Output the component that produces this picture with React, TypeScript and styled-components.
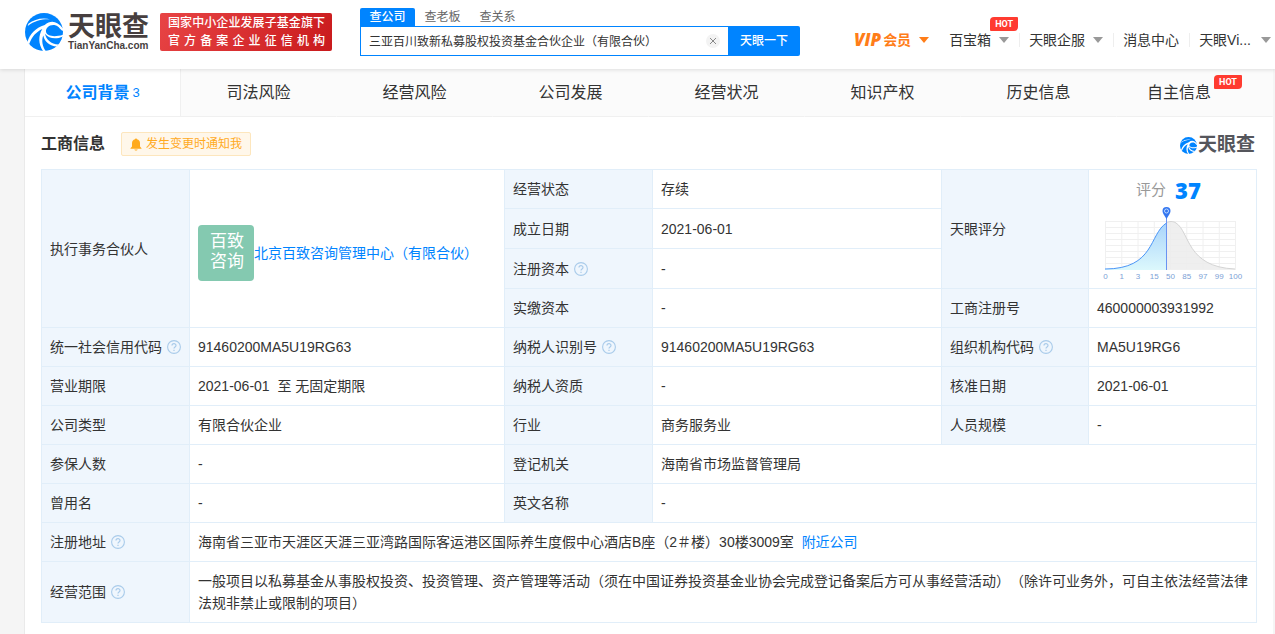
import React from "react";
import styled, { createGlobalStyle, css } from "styled-components";

const Global = createGlobalStyle`
  * { box-sizing: border-box; }
  body {
    margin: 0;
    background: #f5f5f5;
    color: #333;
    font: 14px/22px "Liberation Sans", "Noto Sans CJK SC", sans-serif;
    text-spacing-trim: space-all;
  }
  button, input { font: inherit; color: inherit; padding: 0; margin: 0; border: 0; background: none; }
  button { cursor: pointer; }
  a { color: #0084ff; text-decoration: none; }
`;

/* ---------- header ---------- */

const Header = styled.header`
  position: relative;
  display: flex;
  align-items: flex-start;
  height: 69px;
  padding: 0 4px 0 25px;
  background: #fff;
  box-shadow: 0 1px 4px rgba(0, 0, 0, 0.12);
`;

const Brand = styled.a`
  display: flex;
  gap: 5px;
  padding-top: 13px;
  color: #473f3f;
`;

const BrandText = styled.span`
  display: flex;
  flex-direction: column;
  width: 81px;
  padding-top: 1px;
`;

const BrandName = styled.strong`
  font-size: 27px;
  line-height: 27px;
  white-space: nowrap;
`;

const BrandDomain = styled.strong`
  font-size: 10px;
  line-height: 10px;
`;

const Slogan = styled.p`
  width: 172px;
  margin: 13px 0 0 11px;
  padding: 1px 7px 1px 8px;
  border-radius: 2px;
  background: linear-gradient(120deg, #e84445, #c91a1c);
  color: #fff;
  font-size: 12px;
  font-weight: 500;
  line-height: 18px;
  white-space: nowrap;
`;

const SloganLine = styled.span`
  display: block;
  text-align-last: justify;
`;

const Search = styled.form`
  flex: none;
  width: 440px;
  margin: 8px 0 0 28px;
  font-size: 12px;
`;

const SearchTabs = styled.div`
  display: flex;
`;

const SearchTab = styled.button<{ $active?: boolean }>`
  width: 55px;
  height: 18px;
  line-height: 18px;
  color: #666;
  ${(p) =>
    p.$active &&
    css`
      border-radius: 2px 2px 0 0;
      background: #0084ff;
      color: #fff;
      font-weight: 500;
    `}
`;

const SearchRow = styled.div`
  display: flex;
  height: 30px;
`;

const SearchField = styled.div`
  display: flex;
  flex: 1;
  align-items: center;
  padding: 0 8px;
  border: 1px solid #0084ff;
  border-right: 0;
`;

const SearchInput = styled.input`
  flex: 1;
  min-width: 0;
  padding-top: 2px;
  outline: none;
`;

const ClearButton = styled.button`
  display: flex;
  align-items: center;
  justify-content: center;
  width: 14px;
  height: 14px;
  border-radius: 50%;
  background: #f3f3f3;
`;

const SearchButton = styled.button`
  width: 72px;
  border-radius: 0 2px 2px 0;
  background: #0084ff;
  color: #fff;
  font-weight: 500;
`;

const Nav = styled.nav`
  display: flex;
  margin: 29px 0 0 auto;
  white-space: nowrap;
`;

const NavLink = styled.a<{ $vip?: boolean }>`
  position: relative;
  display: flex;
  align-items: center;
  gap: 8px;
  padding: 0 10px;
  color: ${(p) => (p.$vip ? "#ff7d18" : "#333")};
  font-weight: ${(p) => (p.$vip ? 700 : 400)};
  & + &::before {
    content: "";
    position: absolute;
    left: 0;
    height: 14px;
    border-left: 1px solid #eee;
  }
  &:last-child { padding-right: 0; gap: 10px; }
`;

const VipWord = styled.em`
  margin-right: 2px;
  font-family: "Open Sans", sans-serif;
  font-size: 17px;
  font-weight: 800;
`;

const VipText = styled.span`
  display: flex;
  align-items: center;
`;

const Caret = styled.i`
  border: 5px solid transparent;
  border-top: 6px solid #999;
  border-bottom: 0;
  ${NavLink}:first-child & { border-top-color: #ff7d18; }
`;

const HotBadge = styled.span`
  width: 28px;
  height: 14px;
  border-radius: 4px 1px 4px 1px;
  background: #ff3b30;
  color: #fff;
  font: 700 9px/14px Roboto, sans-serif;
  text-align: center;
`;

const NavHotBadge = styled(HotBadge)`
  position: absolute;
  top: -12px;
  right: 1px;
`;

const TabHotBadge = styled(HotBadge)`
  align-self: flex-start;
  margin-top: 6px;
`;

/* ---------- page ---------- */

const Page = styled.main`
  margin: 0 2px 0 24px;
  padding-bottom: 16px;
  border-left: 1px solid #eaeaea;
  background: #fff;
`;

const Tabs = styled.nav`
  display: grid;
  grid-template-columns: repeat(8, 1fr);
  height: 48px;
`;

const Tab = styled.a<{ $active?: boolean }>`
  display: flex;
  align-items: center;
  justify-content: center;
  gap: 3px;
  border-right: 1px solid ${(p) => (p.$active ? "#f0f0f0" : "transparent")};
  border-bottom: 1px solid #f0f0f0;
  background: ${(p) => (p.$active ? "#fff" : "#fbfbfb")};
  color: ${(p) => (p.$active ? "#0084ff" : "#333")};
  font-size: 16px;
  font-weight: ${(p) => (p.$active ? 700 : 400)};
`;

const TabCount = styled.span`
  font-size: 13px;
  font-weight: 400;
`;

const Section = styled.section`
  padding: 0 16px;
`;

const SectionHead = styled.div`
  display: flex;
  align-items: center;
  height: 52px;
  padding-top: 2px;
`;

const SectionTitle = styled.h2`
  margin: 0 16px 0 0;
  font-size: 16px;
  line-height: 24px;
`;

const NotifyButton = styled.button`
  display: flex;
  align-items: center;
  justify-content: center;
  gap: 4px;
  width: 130px;
  height: 24px;
  border: 1px solid #fde6bd;
  border-radius: 2px;
  background: #fff7ea;
  color: #ffaa1e;
  font-size: 12px;
`;

const Watermark = styled.span`
  display: flex;
  align-items: center;
  gap: 1px;
  margin: 2px 2px 0 auto;
  color: #55565c;
  font-size: 19px;
  font-weight: 700;
  line-height: 20px;
`;

const InfoTable = styled.table`
  width: 100%;
  table-layout: fixed;
  border-collapse: collapse;
`;

const Row = styled.tr<{ $tall?: boolean }>`
  height: ${(p) => (p.$tall ? "40px" : "39px")};
`;

const Label = styled.th`
  padding: 0 8px;
  border: 1px solid #e1eef9;
  background: #eff6fd;
  font-weight: 400;
  text-align: left;
`;

const Value = styled.td`
  padding: 8px 7px 8px 8px;
  border: 1px solid #e1eef9;
`;

const ScoreCell = styled(Value)`
  padding: 7px 8px 0 0;
  vertical-align: top;
`;

const LabelText = styled.span`
  display: flex;
  align-items: center;
  gap: 5px;
`;

const Partner = styled.div`
  display: flex;
  align-items: center;
  padding-top: 8px;
`;

const PartnerLogo = styled.span`
  flex: none;
  width: 56px;
  height: 56px;
  padding: 7px 8px 8px 12px;
  border-radius: 4px;
  background: #84c9b0;
  color: #fff;
  font-size: 17px;
  line-height: 20px;
`;

const Score = styled.div`
  display: flex;
  align-items: center;
  justify-content: center;
  gap: 9px;
  height: 26px;
  color: #999;
  font-size: 15px;
`;

const ScoreNumber = styled.strong`
  color: #0084ff;
  font: 800 22px/26px "Open Sans", "Liberation Sans", sans-serif;
`;

const Chart = styled.svg`
  display: block;
  margin: 3px 0 0 11px;
`;

const LogoMark = ({ size }: { size: number }) => (
  <svg width={size} height={size} viewBox="0 0 112 112" aria-hidden="true">
    <circle cx="56" cy="56" r="56" fill="#0084ff" />
    <g fill="#fff">
      <path d="M7 86C14 62 30 44 58 35C76 20 94 22 112 46L112 52C103 51 102 39 89 36C72 33 60 45 62 56C65 68 86 72 112 64L112 69C90 79 70 75 59 61C62 78 76 91 99 93L94 99C73 96 58 86 54 66C48 80 51 97 61 112L53 112C39 91 39 67 51 47C34 55 21 68 12 92Z" />
      <path d="M10 32C28 17 54 12 76 19C54 17 30 22 8 38Z" />
    </g>
  </svg>
);

const Help = () => (
  <svg width="14" height="14" viewBox="0 0 14 14" fill="none" stroke="#a9cbea" aria-hidden="true">
    <circle cx="7" cy="7" r="6.4" strokeWidth="1.1" />
    <path d="M5 5.6C5 3.1 9 3.1 9 5.5C9 7 7 7 7 8.6M7 9.8V11" strokeWidth="1.2" />
  </svg>
);

const Bell = () => (
  <svg width="12" height="13" viewBox="0 0 12 13" fill="#ffaa1e" aria-hidden="true">
    <path d="M5 1.2C5 .2 7 .2 7 1.2C9 1.7 10 3.2 10 5.2V8.4L11.5 10.2V10.8H.5V10.2L2 8.4V5.2C2 3.2 3 1.7 5 1.2ZM4.3 11.5H7.7C7.2 12.9 4.8 12.9 4.3 11.5Z" />
  </svg>
);

const ticks = ["0", "1", "3", "15", "50", "85", "97", "99", "100"];

const ScoreChart = () => (
  <Chart width="144" height="76" viewBox="0 0 144 76" role="img" aria-label="评分分布">
    <defs>
      <linearGradient id="fill" x1="0" y1="0" x2="0" y2="1">
        <stop offset="0" stopColor="#a9d4fb" />
        <stop offset="1" stopColor="#dcf8fc" />
      </linearGradient>
    </defs>
    <g stroke="#f0f0f0">
      {[0, 1, 2, 3, 4, 5, 6, 7, 8].map((i) => (
        <path key={i} d={`M5 ${15.5 + i * 6}H136`} />
      ))}
      {ticks.map((t, i) => (
        <path key={t} d={`M${5.5 + i * 16.25} 15V64`} />
      ))}
    </g>
    <path d="M66.5 17C69 15 73 15 76 17C90 26 86 61 135 63H66.5Z" fill="#ececec" fillOpacity=".85" />
    <path d="M66.5 17C69 15 73 15 76 17C90 26 86 61 135 63" fill="none" stroke="#d4d4d4" />
    <path d="M5 63C55 63 49 28 66.5 17V64H5Z" fill="url(#fill)" />
    <path d="M5 63C55 63 49 28 66.5 17" fill="none" stroke="#4a95f7" />
    <path d="M66.5 10V64" stroke="#6a93f2" />
    <path d="M66.5 13C64 9 62.500 7 62.5 5A4 4 0 0 1 70.5 5C70.5 7 69 9 66.5 13Z" fill="#3577f0" />
    <circle cx="66.5" cy="5" r="2" fill="none" stroke="#bcd8ff" />
    <g fill="#7d9fd6" fontSize="8" textAnchor="middle" fontFamily="Liberation Sans, sans-serif">
      {ticks.map((t, i) => (
        <text key={t} x={5.5 + i * 16.25} y="73">
          {t}
        </text>
      ))}
    </g>
  </Chart>
);

type FieldProps = { label: string; help?: boolean; span?: number; children: React.ReactNode };

const Field = ({ label, help, span, children }: FieldProps) => (
  <>
    <Label scope="row">
      <LabelText>
        {label}
        {help && <Help />}
      </LabelText>
    </Label>
    <Value colSpan={span}>{children}</Value>
  </>
);

const pageTabs = ["司法风险", "经营风险", "公司发展", "经营状况", "知识产权", "历史信息", "自主信息"];

export default function App() {
  return (
    <>
      <Global />
      <Header>
        <Brand href="#">
          <LogoMark size={38} />
          <BrandText>
            <BrandName>天眼查</BrandName>
            <BrandDomain>TianYanCha.com</BrandDomain>
          </BrandText>
        </Brand>
        <Slogan>
          <SloganLine>国家中小企业发展子基金旗下</SloganLine>
          <SloganLine>官方备案企业征信机构</SloganLine>
        </Slogan>
        <Search onSubmit={(e) => e.preventDefault()}>
          <SearchTabs>
            <SearchTab type="button" $active>查公司</SearchTab>
            <SearchTab type="button">查老板</SearchTab>
            <SearchTab type="button">查关系</SearchTab>
          </SearchTabs>
          <SearchRow>
            <SearchField>
              <SearchInput aria-label="搜索公司" defaultValue="三亚百川致新私募股权投资基金合伙企业（有限合伙）" />
              <ClearButton type="button" aria-label="清除">
                <svg width="6" height="6" viewBox="0 0 6 6" stroke="#888" aria-hidden="true">
                  <path d="M0 0L6 6M6 0L0 6" />
                </svg>
              </ClearButton>
            </SearchField>
            <SearchButton>天眼一下</SearchButton>
          </SearchRow>
        </Search>
        <Nav>
          <NavLink href="#" $vip>
            <VipText><VipWord>VIP</VipWord>会员</VipText>
            <Caret />
          </NavLink>
          <NavLink href="#">百宝箱<Caret /><NavHotBadge>HOT</NavHotBadge></NavLink>
          <NavLink href="#">天眼企服<Caret /></NavLink>
          <NavLink href="#">消息中心</NavLink>
          <NavLink href="#">天眼Vi...<Caret /></NavLink>
        </Nav>
      </Header>
      <Page>
        <Tabs>
          <Tab href="#" $active>公司背景<TabCount>3</TabCount></Tab>
          {pageTabs.map((name) => (
            <Tab href="#" key={name}>
              {name}
              {name === "自主信息" && <TabHotBadge>HOT</TabHotBadge>}
            </Tab>
          ))}
        </Tabs>
        <Section>
          <SectionHead>
            <SectionTitle>工商信息</SectionTitle>
            <NotifyButton type="button"><Bell />发生变更时通知我</NotifyButton>
            <Watermark><LogoMark size={17} />天眼查</Watermark>
          </SectionHead>
          <InfoTable>
            <colgroup>
              <col style={{ width: "148px" }} />
              <col />
              <col style={{ width: "148px" }} />
              <col style={{ width: "289px" }} />
              <col style={{ width: "147px" }} />
              <col style={{ width: "168px" }} />
            </colgroup>
            <tbody>
              <Row>
                <Label scope="row" rowSpan={4}>执行事务合伙人</Label>
                <Value rowSpan={4}>
                  <Partner>
                    <PartnerLogo>百致咨询</PartnerLogo>
                    <a href="#">北京百致咨询管理中心（有限合伙）</a>
                  </Partner>
                </Value>
                <Field label="经营状态">存续</Field>
                <Label scope="row" rowSpan={3}>天眼评分</Label>
                <ScoreCell rowSpan={3}>
                  <Score>评分<ScoreNumber>37</ScoreNumber></Score>
                  <ScoreChart />
                </ScoreCell>
              </Row>
              <Row $tall><Field label="成立日期">2021-06-01</Field></Row>
              <Row $tall><Field label="注册资本" help>-</Field></Row>
              <Row>
                <Field label="实缴资本">-</Field>
                <Field label="工商注册号">460000003931992</Field>
              </Row>
              <Row>
                <Field label="统一社会信用代码" help>91460200MA5U19RG63</Field>
                <Field label="纳税人识别号" help>91460200MA5U19RG63</Field>
                <Field label="组织机构代码" help>MA5U19RG6</Field>
              </Row>
              <Row>
                <Field label="营业期限">2021-06-01&nbsp; 至 无固定期限</Field>
                <Field label="纳税人资质">-</Field>
                <Field label="核准日期">2021-06-01</Field>
              </Row>
              <Row>
                <Field label="公司类型">有限合伙企业</Field>
                <Field label="行业">商务服务业</Field>
                <Field label="人员规模">-</Field>
              </Row>
              <Row>
                <Field label="参保人数">-</Field>
                <Field label="登记机关" span={3}>海南省市场监督管理局</Field>
              </Row>
              <Row>
                <Field label="曾用名">-</Field>
                <Field label="英文名称" span={3}>-</Field>
              </Row>
              <Row>
                <Field label="注册地址" help span={5}>
                  海南省三亚市天涯区天涯三亚湾路国际客运港区国际养生度假中心酒店B座（2＃楼）30楼3009室&nbsp; <a href="#">附近公司</a>
                </Field>
              </Row>
              <Row>
                <Field label="经营范围" help span={5}>
                  一般项目以私募基金从事股权投资、投资管理、资产管理等活动（须在中国证券投资基金业协会完成登记备案后方可从事经营活动）（除许可业务外，可自主依法经营法律法规非禁止或限制的项目）
                </Field>
              </Row>
            </tbody>
          </InfoTable>
        </Section>
      </Page>
    </>
  );
}
